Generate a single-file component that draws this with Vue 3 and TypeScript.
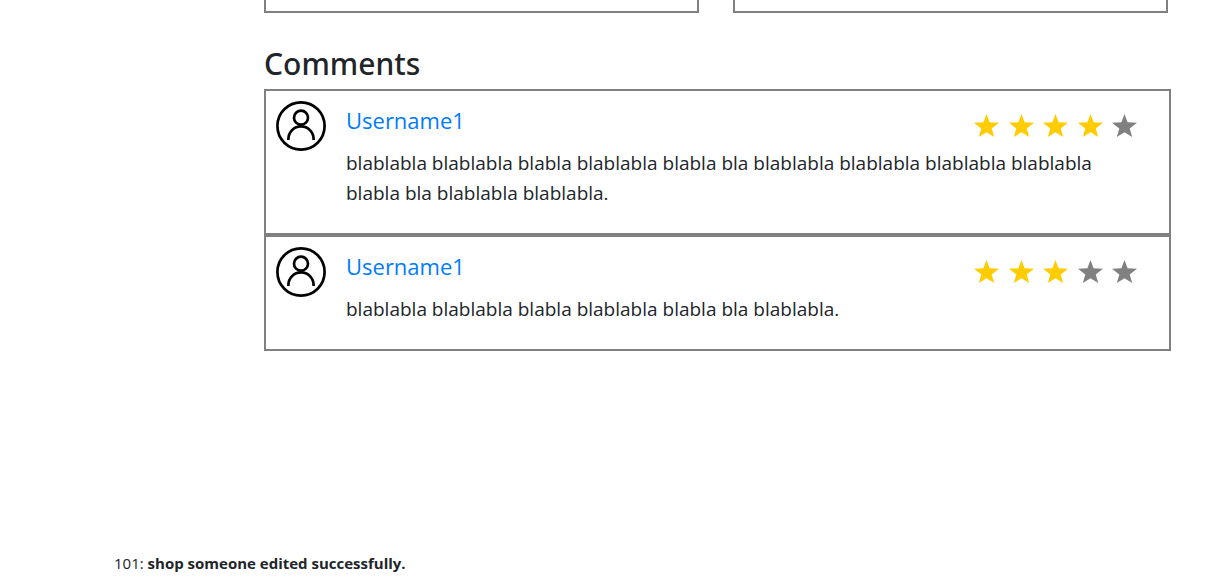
<script setup lang="ts">
interface Review { id: number; user: string; rating: number; text: string }

const reviews: Review[] = [
  { id: 1, user: 'Username1', rating: 4, text: 'blablabla blablabla blabla blablabla blabla bla blablabla blablabla blablabla blablabla blabla bla blablabla blablabla.' },
  { id: 2, user: 'Username1', rating: 3, text: 'blablabla blablabla blabla blablabla blabla bla blablabla.' },
]
</script>

<template>
  <div class="page">
    <main class="content">
      <div class="panels">
        <div class="panel"></div>
        <div class="panel"></div>
      </div>
      <h2>Comments</h2>
      <article v-for="r in reviews" :key="r.id" class="comment">
        <svg class="avatar" viewBox="0 0 50 50" fill="none" stroke="#000" stroke-width="2.7" aria-hidden="true">
          <circle cx="25" cy="25" r="23.6" />
          <circle cx="25" cy="16.7" r="7" />
          <path d="M12.4 39v-1a12.6 12.6 0 0 1 25.2 0v1" />
        </svg>
        <div class="body">
          <header>
            <a href="#">{{ r.user }}</a>
            <div class="stars" role="img" :aria-label="`${r.rating} out of 5`">
              <svg v-for="n in 5" :key="n" :class="{ on: n <= r.rating }" viewBox="0 0 25 23">
                <path d="M12.5 0l3.1 8.3 9.4.4-7.3 5.8 2.5 8.5-7.7-4.8L4.8 23l2.5-8.5L0 8.7l9.4-.4z" />
              </svg>
            </div>
          </header>
          <p>{{ r.text }}</p>
        </div>
      </article>
    </main>
    <footer>101: <strong>shop someone edited successfully.</strong></footer>
  </div>
</template>

<style>
body { margin: 0; background: #fff; }
</style>

<style scoped>
.page {
  min-height: 100vh;
  box-sizing: border-box;
  display: flex;
  flex-direction: column;
  padding-bottom: 7px;
  font-family: "Open Sans", "Noto Sans", sans-serif;
  color: #212529;
}
.content { margin-left: 264px; margin-right: 36px; }
.panels { display: grid; grid-template-columns: 1fr 1fr; gap: 34px; margin-right: 3px; }
.panel { height: 11px; border: 2px solid gray; border-top: 0; }
h2 { margin: 32px 0 6px; font-family: "Noto Sans", sans-serif; font-size: 30px; line-height: 38px; font-weight: 500; }
.comment {
  display: flex;
  align-items: flex-start;
  border: 2px solid gray;
  padding: 10px 32px 25px 10px;
}
.avatar { width: 50px; height: 50px; flex: none; margin-right: 20px; }
.body { flex: 1; min-width: 0; }
header { display: flex; justify-content: space-between; height: 47px; }
a { color: #007bff; font-size: 22px; line-height: 38px; text-decoration: none; }
p { margin: 0; font-size: 19px; line-height: 30px; }
.stars { display: flex; justify-content: space-between; width: 163px; margin-top: 13px; }
.stars svg { width: 25px; height: 23px; fill: gray; }
.stars svg.on { fill: #fc0; }
footer { margin: auto 0 0 114px; font-size: 15px; line-height: 24px; }
strong { font-weight: 700; }
</style>
